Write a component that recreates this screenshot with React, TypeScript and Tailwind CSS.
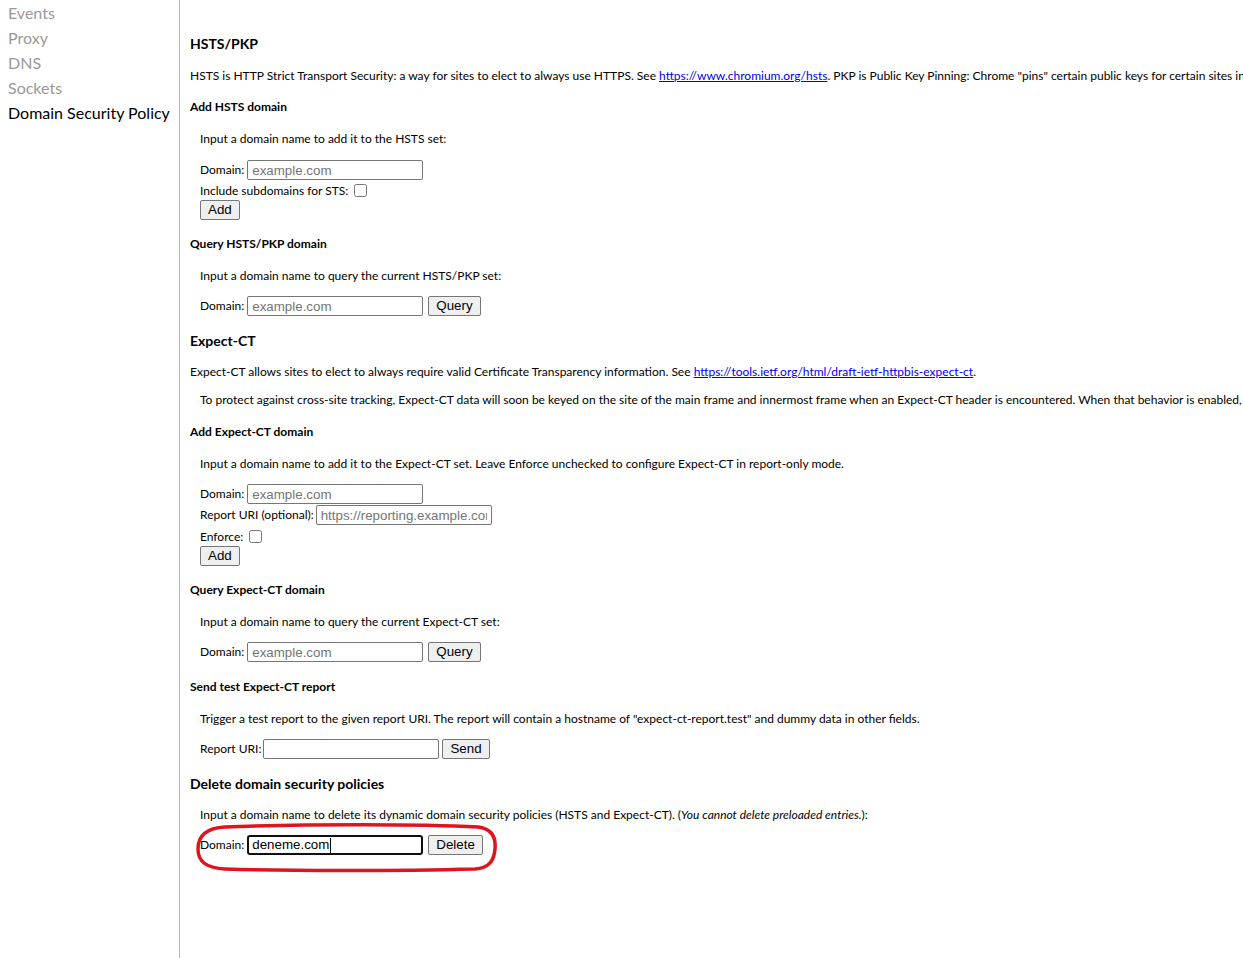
import React from 'react';

const font = { fontFamily: 'Lato, "Open Sans", sans-serif' };
const ctrlFont = { fontFamily: '"Liberation Sans", Arial, sans-serif' };

const sideItems = ['Events', 'Proxy', 'DNS', 'Sockets', 'Domain Security Policy'];

const Field = ({ placeholder }: { placeholder?: string }) => (
  <input
    placeholder={placeholder}
    className="w-[176px] h-[20px] border border-[#767676] rounded-[2px] px-[4px] text-[13.33px] text-black placeholder:text-[#757575] bg-white outline-none"
    style={ctrlFont}
  />
);

const Btn = ({ children, className = '' }: { children: React.ReactNode; className?: string }) => (
  <button
    className={`h-[20px] px-[7px] border border-[#767676] rounded-[2px] bg-[#efefef] text-[13.33px] text-black leading-none ${className}`}
    style={ctrlFont}
  >
    {children}
  </button>
);

const H2 = ({ children, mt }: { children: React.ReactNode; mt: string }) => (
  <h2 className={`${mt} text-[14px] leading-[18px] font-bold text-black`}>{children}</h2>
);

const H3 = ({ children, mt }: { children: React.ReactNode; mt: string }) => (
  <h3 className={`${mt} text-[12px] leading-[16px] font-bold text-black`}>{children}</h3>
);

const P = ({ children, mt, indent = true }: { children: React.ReactNode; mt: string; indent?: boolean }) => (
  <p className={`${mt} ${indent ? 'pl-[10px]' : ''} text-[12px] leading-[16px] text-black`}>{children}</p>
);

const Link = ({ href }: { href: string }) => (
  <a href={href} className="text-[#0000ee] underline">{href}</a>
);

export default function App() {
  return (
    <div className="flex min-h-[958px] bg-white overflow-hidden" style={font}>
      {/* sidebar */}
      <div className="w-[180px] shrink-0 border-r border-[#b4b4b4]">
        {sideItems.map((s) => (
          <div
            key={s}
            className={`pl-[8px] text-[16px] leading-[25px] whitespace-nowrap ${s === 'Domain Security Policy' ? 'text-black' : 'text-[#999]'}`}
          >
            {s}
          </div>
        ))}
      </div>

      {/* content */}
      <div className="relative flex-1 pl-[10px] flex flex-col whitespace-nowrap overflow-hidden">
        <H2 mt="mt-[35px]">HSTS/PKP</H2>
        <P mt="mt-[15px]" indent={false}>
          HSTS is HTTP Strict Transport Security: a way for sites to elect to always use HTTPS. See{' '}
          <Link href="https://www.chromium.org/hsts" />. PKP is Public Key Pinning: Chrome "pins" certain public keys for certain sites in official builds.
        </P>

        <H3 mt="mt-[15px]">Add HSTS domain</H3>
        <P mt="mt-[16px]">Input a domain name to add it to the HSTS set:</P>
        <div className="mt-[13px] pl-[10px] h-[20px] flex items-center text-[12px]">
          <span className="mr-[3px]">Domain:</span>
          <Field placeholder="example.com" />
        </div>
        <div className="mt-[1px] pl-[10px] h-[19px] flex items-center gap-[6px] text-[12px]">
          <span>Include subdomains for STS:</span>
          <input type="checkbox" className="w-[13px] h-[13px] m-0" />
        </div>
        <div className="pl-[10px] h-[20px] flex">
          <Btn>Add</Btn>
        </div>

        <H3 mt="mt-[16px]">Query HSTS/PKP domain</H3>
        <P mt="mt-[16px]">Input a domain name to query the current HSTS/PKP set:</P>
        <div className="mt-[12px] pl-[10px] h-[20px] flex items-center text-[12px]">
          <span className="mr-[3px]">Domain:</span>
          <Field placeholder="example.com" />
          <Btn className="ml-[5px]">Query</Btn>
        </div>

        <H2 mt="mt-[16px]">Expect-CT</H2>
        <P mt="mt-[14px]" indent={false}>
          Expect-CT allows sites to elect to always require valid Certificate Transparency information. See{' '}
          <Link href="https://tools.ietf.org/html/draft-ietf-httpbis-expect-ct" />.
        </P>
        <P mt="mt-[12px]">
          To protect against cross-site tracking, Expect-CT data will soon be keyed on the site of the main frame and innermost frame when an Expect-CT header is encountered. When that behavior is enabled, this page will only show data for requests.
        </P>

        <H3 mt="mt-[16px]">Add Expect-CT domain</H3>
        <P mt="mt-[16px]">
          Input a domain name to add it to the Expect-CT set. Leave Enforce unchecked to configure Expect-CT in report-only mode.
        </P>
        <div className="mt-[12px] pl-[10px] h-[20px] flex items-center text-[12px]">
          <span className="mr-[3px]">Domain:</span>
          <Field placeholder="example.com" />
        </div>
        <div className="mt-[1px] pl-[10px] h-[20px] flex items-center text-[12px]">
          <span className="mr-[2px]">Report URI (optional):</span>
          <Field placeholder="https://reporting.example.com" />
        </div>
        <div className="mt-[2px] pl-[10px] h-[19px] flex items-center gap-[6px] text-[12px]">
          <span>Enforce:</span>
          <input type="checkbox" className="w-[13px] h-[13px] m-0" />
        </div>
        <div className="pl-[10px] h-[20px] flex">
          <Btn>Add</Btn>
        </div>

        <H3 mt="mt-[16px]">Query Expect-CT domain</H3>
        <P mt="mt-[16px]">Input a domain name to query the current Expect-CT set:</P>
        <div className="mt-[12px] pl-[10px] h-[20px] flex items-center text-[12px]">
          <span className="mr-[3px]">Domain:</span>
          <Field placeholder="example.com" />
          <Btn className="ml-[5px]">Query</Btn>
        </div>

        <H3 mt="mt-[17px]">Send test Expect-CT report</H3>
        <P mt="mt-[16px]">
          Trigger a test report to the given report URI. The report will contain a hostname of "expect-ct-report.test" and dummy data in other fields.
        </P>
        <div className="mt-[12px] pl-[10px] h-[20px] flex items-center text-[12px]">
          <span className="mr-[2px]">Report URI:</span>
          <Field />
          <Btn className="ml-[3px]">Send</Btn>
        </div>

        <H2 mt="mt-[16px]">Delete domain security policies</H2>
        <P mt="mt-[14px]">
          Input a domain name to delete its dynamic domain security policies (HSTS and Expect-CT). (<i>You cannot delete preloaded entries.</i>):
        </P>
        <div className="mt-[12px] pl-[10px] h-[20px] flex items-center text-[12px]">
          <span className="mr-[3px]">Domain:</span>
          <div
            className="w-[176px] h-[20px] border-2 border-[#101010] rounded-[3px] px-[3px] flex items-center text-[13.33px] text-black bg-white"
            style={ctrlFont}
          >
            deneme.com
            <span className="ml-[1px] w-[1px] h-[15px] bg-black" />
          </div>
          <Btn className="ml-[5px]">Delete</Btn>
        </div>

        {/* red annotation ring */}
        <svg
          className="absolute left-[15px] top-[823px] pointer-events-none"
          width="305"
          height="50"
          viewBox="0 0 305 50"
        >
          <path
            d="M30 4 C 115 1, 225 1, 283 4 C 298 6, 301 16, 300 26 C 299 38, 294 45, 280 46 C 205 48, 90 48, 30 46 C 10 45, 3 38, 3 26 C 3 12, 12 5, 30 4 Z"
            fill="none"
            stroke="#e0141e"
            strokeWidth="3.5"
          />
        </svg>
      </div>
    </div>
  );
}
